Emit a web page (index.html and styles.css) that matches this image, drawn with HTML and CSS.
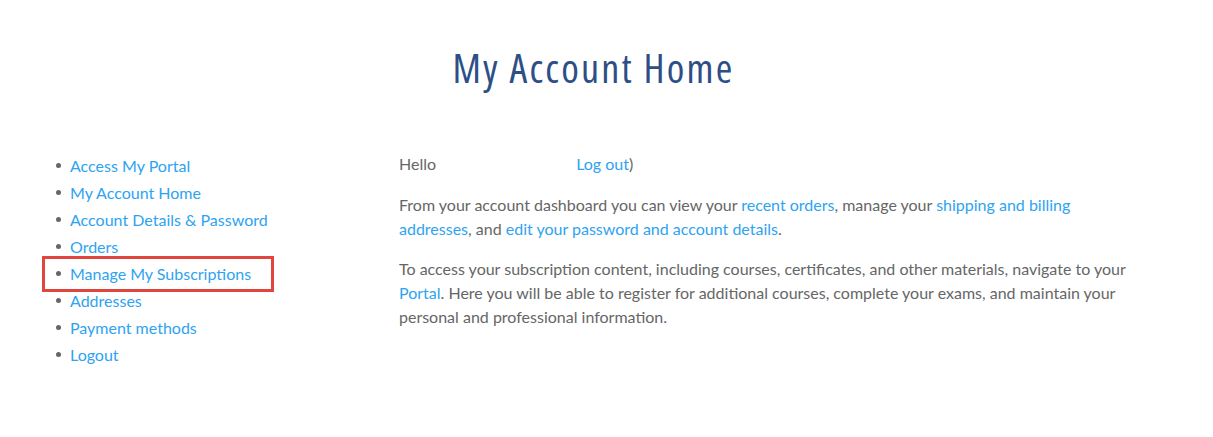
FILE: index.html
```html
<!DOCTYPE html>
<html lang="en">
<head>
<meta charset="utf-8">
<title>My Account Home</title>
<link rel="stylesheet" href="styles.css">
</head>
<body>
<div class="page">
  <h1 class="title">My Account Home</h1>
  <div class="account">
    <nav class="account-nav">
      <ul class="nav-list">
        <li class="nav-item"><a href="#">Access My Portal</a></li>
        <li class="nav-item"><a href="#">My Account Home</a></li>
        <li class="nav-item"><a href="#">Account Details &amp; Password</a></li>
        <li class="nav-item"><a href="#">Orders</a></li>
        <li class="nav-item nav-item--marked"><a href="#">Manage My Subscriptions</a></li>
        <li class="nav-item"><a href="#">Addresses</a></li>
        <li class="nav-item"><a href="#">Payment methods</a></li>
        <li class="nav-item"><a href="#">Logout</a></li>
      </ul>
    </nav>
    <div class="account-content">
      <p>Hello <span class="hidden-name">&nbsp;</span><a href="#">Log out</a>)</p>
      <p>From your account dashboard you can view your <a href="#">recent orders</a>, manage your <a href="#">shipping and billing addresses</a>, and <a href="#">edit your password and account details</a>.</p>
      <p>To access your subscription content, including courses, certificates, and other materials, navigate to your <a href="#">Portal</a>. Here you will be able to register for additional courses, complete your exams, and maintain your personal and professional information.</p>
    </div>
  </div>
</div>
</body>
</html>
```

FILE: styles.css
```css
html, body {
  margin: 0;
  padding: 0;
  background: #ffffff;
}

body {
  font-family: "Lato", "Open Sans", sans-serif;
  font-size: 16px;
  color: #666666;
}

a {
  color: #2ea3f2;
  text-decoration: none;
}

.page {
  width: 1103px;
  margin-left: 42px;
  padding-top: 40px;
}

.title {
  margin: 0 0 56px;
  text-align: center;
  font-family: "Open Sans", sans-serif;
  font-stretch: condensed;
  font-weight: 400;
  font-size: 40px;
  letter-spacing: 2.2px;
  line-height: 56px;
  color: #2d4f85;
}

.account {
  display: flex;
}

.account-nav {
  width: 357px;
  flex: none;
}

.nav-list {
  list-style: none;
  margin: 0;
  padding: 0;
}

.nav-item {
  position: relative;
  width: fit-content;
  margin-left: 4px;
  padding: 0 19px 0 24px;
  line-height: 27px;
}

.nav-item::before {
  content: "";
  position: absolute;
  left: 10px;
  top: 11px;
  width: 5px;
  height: 5px;
  border-radius: 50%;
  background: #666666;
}

.nav-item--marked::after {
  content: "";
  position: absolute;
  top: -4px;
  bottom: -5px;
  left: -4px;
  right: -4px;
  border: 3px solid #e0463d;
  pointer-events: none;
}

.account-content {
  flex: 1;
  line-height: 24px;
}

.account-content p {
  margin: 0 0 16.5px;
}

.hidden-name {
  display: inline-block;
  width: 136px;
}
```
